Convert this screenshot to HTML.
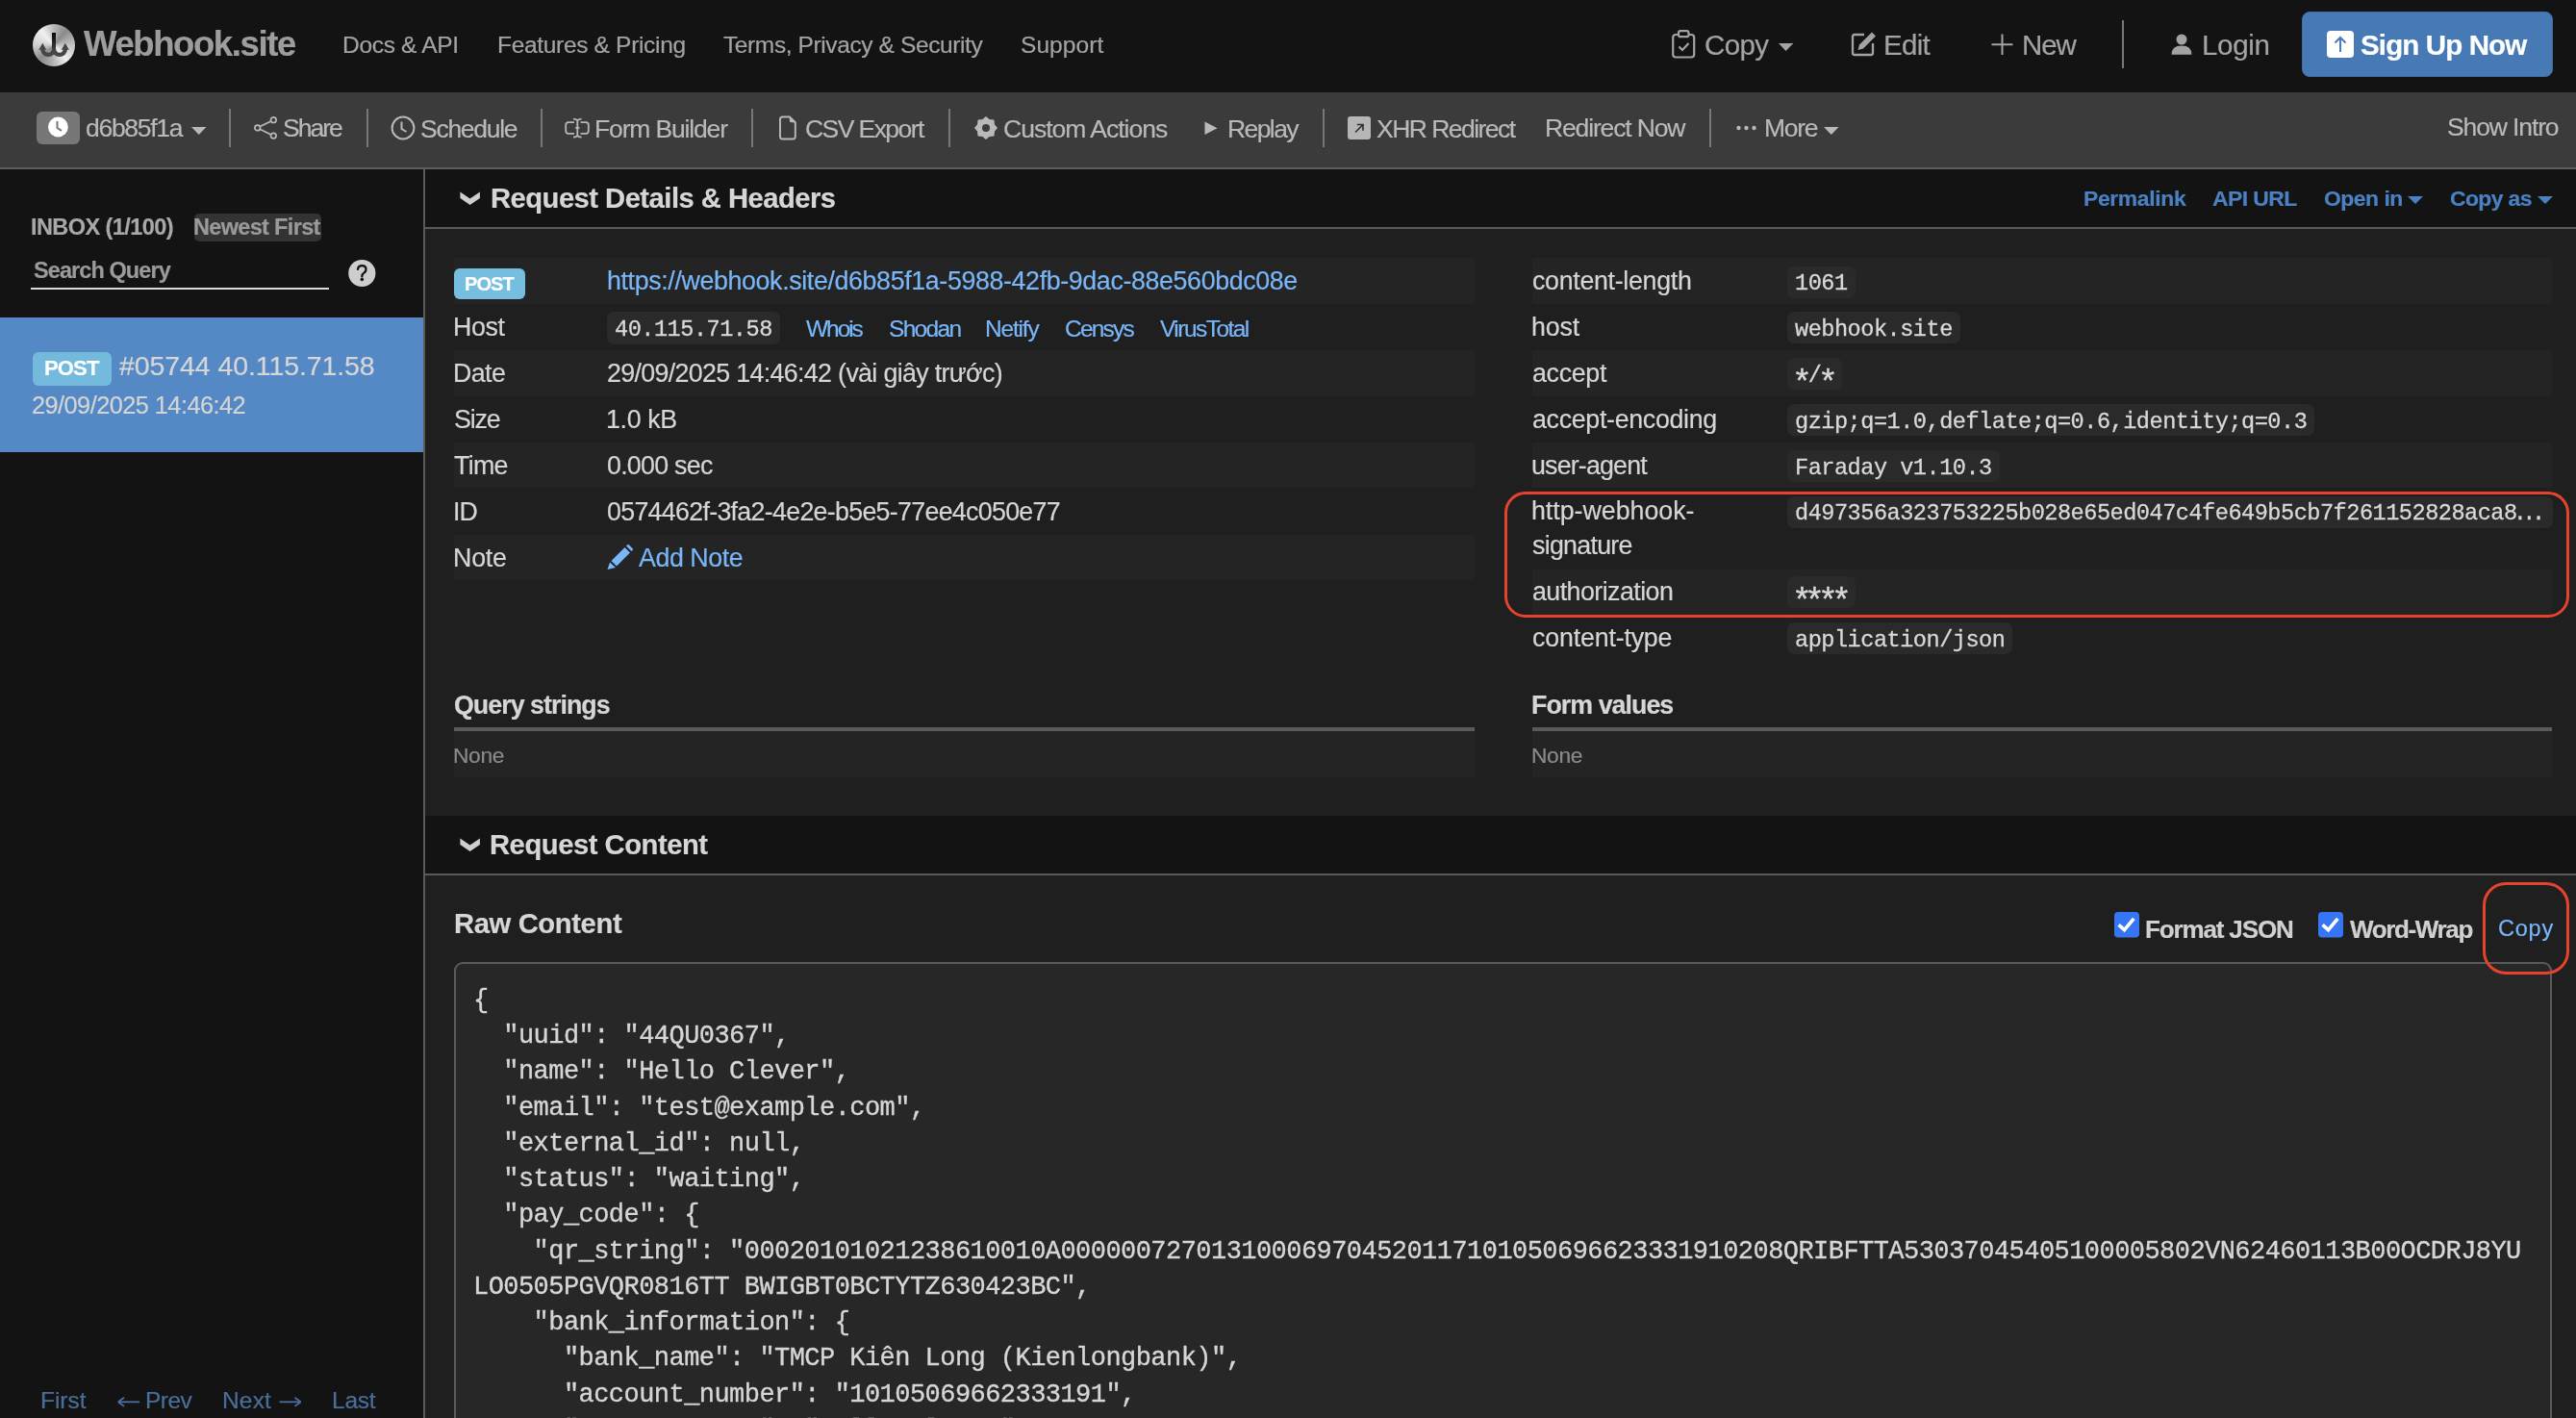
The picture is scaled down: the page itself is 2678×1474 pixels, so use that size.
<!DOCTYPE html>
<html><head><meta charset="utf-8"><title>Webhook.site</title>
<style>
html,body{margin:0;padding:0;width:2678px;height:1474px;overflow:hidden;background:#1f1f1f;font-family:"Liberation Sans",sans-serif}
.a{position:absolute}
.t{position:absolute;white-space:nowrap;line-height:1;font-family:"Liberation Sans",sans-serif;will-change:transform}
.m{font-family:"Liberation Mono",monospace}
.cbox{position:absolute;height:33px;background:#2a2a2a;border-radius:7px}
.div{position:absolute;width:2px;background:#777;top:113px;height:40px}
.code{position:absolute;left:492px;white-space:pre;font-family:"Liberation Mono",monospace;font-size:27px;letter-spacing:-0.55px;line-height:1;color:#d6d6d6;will-change:transform;-webkit-text-stroke:0.35px #d6d6d6}
</style></head><body>
<!-- navbar -->
<div class="a" style="left:0;top:0;width:2678px;height:96px;background:#131313"></div>
<!-- toolbar -->
<div class="a" style="left:0;top:96px;width:2678px;height:78px;background:#3b3b3b"></div>
<div class="a" style="left:0;top:174px;width:2678px;height:2px;background:#5c5c5c"></div>
<!-- sidebar -->
<div class="a" style="left:0;top:176px;width:440px;height:1298px;background:#131313"></div>
<div class="a" style="left:440px;top:176px;width:2px;height:1298px;background:#5a5a5a"></div>
<div class="a" style="left:0;top:330px;width:440px;height:140px;background:#5589c5"></div>
<div class="a" style="left:202px;top:222px;width:132px;height:29px;background:#333;border-radius:5px"></div>
<div class="a" style="left:32px;top:299px;width:310px;height:2px;background:#dcdcdc"></div>
<div class="a" style="left:34px;top:366px;width:82px;height:35px;background:#74badd;border-radius:6px"></div>
<svg class="a" style="left:361px;top:269px" width="30" height="30" viewBox="0 0 30 30"><circle cx="15.3" cy="15" r="14.1" fill="#cdcdcd"/><path d="M11 10.9 Q11.4 7.2 15.3 7.2 Q19.5 7.2 19.5 10.9 Q19.5 13.1 17.4 14.6 Q15.3 16 15.3 18.2" fill="none" stroke="#111" stroke-width="2.3" stroke-linecap="round"/><circle cx="15.3" cy="21.4" r="1.8" fill="#111"/></svg>

<!-- section 1 header -->
<div class="a" style="left:442px;top:176px;width:2236px;height:60px;background:#131313"></div>
<div class="a" style="left:442px;top:236px;width:2236px;height:2px;background:#5a5a5a"></div>
<!-- stripes left -->
<div class="a" style="left:472px;top:268px;width:1061px;height:48px;background:#242424"></div>
<div class="a" style="left:472px;top:363.6px;width:1061px;height:48px;background:#242424"></div>
<div class="a" style="left:472px;top:459.8px;width:1061px;height:47.7px;background:#242424"></div>
<div class="a" style="left:472px;top:556px;width:1061px;height:47.4px;background:#242424"></div>
<!-- stripes right -->
<div class="a" style="left:1593px;top:268px;width:1060px;height:48.3px;background:#242424"></div>
<div class="a" style="left:1593px;top:364.3px;width:1060px;height:47.5px;background:#242424"></div>
<div class="a" style="left:1593px;top:460px;width:1060px;height:47.1px;background:#242424"></div>
<div class="a" style="left:1593px;top:591.8px;width:1060px;height:47px;background:#242424"></div>
<!-- POST badge main -->
<div class="a" style="left:472px;top:279px;width:74px;height:32px;background:#76bedf;border-radius:6px"></div>
<!-- host code -->
<div class="cbox" style="left:631px;top:324px;width:180px;height:34px"></div>
<div class="cbox" style="left:1858px;top:276.5px;width:70.6px"></div>
<div class="t m" style="left:1866.0px;top:283.0px;font-size:23.6px;letter-spacing:-0.51px;-webkit-text-stroke:0.3px #d8d8d8;color:#d8d8d8">1061</div>
<div class="cbox" style="left:1858px;top:324.4px;width:179.8px"></div>
<div class="t m" style="left:1866.0px;top:330.9px;font-size:23.6px;letter-spacing:-0.51px;-webkit-text-stroke:0.3px #d8d8d8;color:#d8d8d8">webhook.site</div>
<div class="cbox" style="left:1858px;top:372.0px;width:57.0px"></div>
<div class="t m" style="left:1866.0px;top:378.5px;font-size:23.6px;letter-spacing:-0.51px;-webkit-text-stroke:0.3px #d8d8d8;color:#d8d8d8">&nbsp;/&nbsp;</div>
<div class="t m" style="left:1862.5px;top:382.5px;font-size:34.7px;color:#d8d8d8;-webkit-text-stroke:0.4px #d8d8d8">*</div>
<div class="t m" style="left:1889.8px;top:382.5px;font-size:34.7px;color:#d8d8d8;-webkit-text-stroke:0.4px #d8d8d8">*</div>
<div class="cbox" style="left:1858px;top:420.2px;width:548.4px"></div>
<div class="t m" style="left:1866.0px;top:426.7px;font-size:23.6px;letter-spacing:-0.51px;-webkit-text-stroke:0.3px #d8d8d8;color:#d8d8d8">gzip;q=1.0,deflate;q=0.6,identity;q=0.3</div>
<div class="cbox" style="left:1858px;top:468.2px;width:220.8px"></div>
<div class="t m" style="left:1866.0px;top:474.7px;font-size:23.6px;letter-spacing:-0.51px;-webkit-text-stroke:0.3px #d8d8d8;color:#d8d8d8">Faraday v1.10.3</div>
<div class="cbox" style="left:1858px;top:515.8px;width:795.7px"></div>
<div class="t m" style="left:1866.0px;top:522.3px;font-size:23.6px;letter-spacing:-0.51px;-webkit-text-stroke:0.3px #d8d8d8;color:#d8d8d8">d497356a323753225b028e65ed047c4fe649b5cb7f261152828aca8<span style="letter-spacing:-4.5px;margin-left:-4px">...</span></div>
<div class="cbox" style="left:1858px;top:599.0px;width:70.6px"></div>
<div class="t m" style="left:1866.0px;top:605.5px;font-size:23.6px;letter-spacing:-0.51px;-webkit-text-stroke:0.3px #d8d8d8;color:#d8d8d8">&nbsp;&nbsp;&nbsp;&nbsp;</div>
<div class="t m" style="left:1862.5px;top:609.5px;font-size:34.7px;color:#d8d8d8;-webkit-text-stroke:0.4px #d8d8d8">*</div>
<div class="t m" style="left:1876.2px;top:609.5px;font-size:34.7px;color:#d8d8d8;-webkit-text-stroke:0.4px #d8d8d8">*</div>
<div class="t m" style="left:1889.8px;top:609.5px;font-size:34.7px;color:#d8d8d8;-webkit-text-stroke:0.4px #d8d8d8">*</div>
<div class="t m" style="left:1903.5px;top:609.5px;font-size:34.7px;color:#d8d8d8;-webkit-text-stroke:0.4px #d8d8d8">*</div>
<div class="cbox" style="left:1858px;top:647.2px;width:234.4px"></div>
<div class="t m" style="left:1866.0px;top:653.7px;font-size:23.6px;letter-spacing:-0.51px;-webkit-text-stroke:0.3px #d8d8d8;color:#d8d8d8">application/json</div>
<div class="t m" style="left:639px;top:331.2px;font-size:23.6px;letter-spacing:-0.51px;-webkit-text-stroke:0.3px #d8d8d8;color:#d8d8d8">40.115.71.58</div>
<!-- query strings -->
<div class="a" style="left:472px;top:756px;width:1061px;height:4px;background:#5a5a5a"></div>
<div class="a" style="left:1593px;top:756px;width:1060px;height:4px;background:#5a5a5a"></div>
<div class="a" style="left:472px;top:760px;width:1061px;height:48px;background:#242424"></div>
<div class="a" style="left:1593px;top:760px;width:1060px;height:48px;background:#242424"></div>

<!-- section 2 header -->
<div class="a" style="left:442px;top:848px;width:2236px;height:60px;background:#131313"></div>
<div class="a" style="left:442px;top:908px;width:2236px;height:2px;background:#5a5a5a"></div>
<!-- pre box -->
<div class="a" style="left:472px;top:1000px;width:2177px;height:600px;background:#272727;border:2px solid #5a5a5a;border-radius:9px"></div>

<!-- toolbar dividers -->
<div class="div" style="left:238px"></div>
<div class="div" style="left:381px"></div>
<div class="div" style="left:562px"></div>
<div class="div" style="left:781px"></div>
<div class="div" style="left:986px"></div>
<div class="div" style="left:1375px"></div>
<div class="div" style="left:1777px"></div>
<div class="a" style="left:2206px;top:21px;width:2px;height:50px;background:#777"></div>

<!-- sign up button -->
<div class="a" style="left:2393px;top:12px;width:259px;height:66px;background:#477ab5;border:1px solid #3f6da6;border-radius:8px"></div>

<div class="a" style="left:34px;top:25px;width:44px;height:44px;border-radius:50%;background:conic-gradient(from 0deg,#b8b8b8 0deg,#8a8a8a 40deg,#c4c4c4 90deg,#efefef 140deg,#b0b0b0 185deg,#8c8c8c 225deg,#cfcfcf 270deg,#f0f0f0 320deg,#b8b8b8 360deg)"></div>
<svg class="a" style="left:33px;top:24px" width="46" height="46" viewBox="0 0 46 46"><defs><linearGradient id="stm" gradientUnits="userSpaceOnUse" x1="0" y1="10" x2="0" y2="30"><stop offset="0" stop-color="#050505"/><stop offset="1" stop-color="#484848"/></linearGradient></defs>
<path d="M23 10 V27.5" stroke="url(#stm)" stroke-width="4" fill="none"/>
<path d="M11.3 27 A5.85 5.85 0 0 0 23 27 A5.9 5.9 0 0 0 34.8 27" stroke="#464646" stroke-width="4.4" fill="none"/>
<path d="M7.2 28 L11.3 20.8 L15.4 28 Q11.3 26.6 7.2 28 Z M30.7 28 L34.8 20.8 L38.9 28 Q34.8 26.6 30.7 28 Z" fill="#464646"/></svg>
<svg class="a" style="left:1737px;top:31px" width="28" height="30" viewBox="0 0 28 30"><rect x="2.2" y="5" width="22" height="23.5" rx="3" fill="none" stroke="#a3a3a3" stroke-width="2.2"/><rect x="8" y="1.2" width="10.5" height="6" rx="2" fill="#131313" stroke="#a3a3a3" stroke-width="2.2"/><path d="M8.5 17.5 L12 21 L18.5 14" fill="none" stroke="#a3a3a3" stroke-width="2.2"/></svg>
<svg class="a" style="left:1848.5px;top:45px" width="15.2" height="8" viewBox="0 0 15.2 8"><path d="M0 0 H15.2 L7.6 8 Z" fill="#a3a3a3"/></svg>
<svg class="a" style="left:1924px;top:32px" width="28" height="27" viewBox="0 0 28 27"><path d="M14 4 H4 Q2 4 2 6 V23 Q2 25 4 25 H21 Q23 25 23 23 V13" fill="none" stroke="#a3a3a3" stroke-width="2.3"/><path d="M22 1.5 L26 5.5 L13 18.5 L7.5 20 L9 14.5 Z" fill="#a3a3a3"/></svg>
<svg class="a" style="left:2070px;top:35px" width="23" height="23" viewBox="0 0 23 23"><path d="M11.5 0.5 V22 M0.5 11.2 H22.5" stroke="#a3a3a3" stroke-width="2"/></svg>
<svg class="a" style="left:2257px;top:35px" width="22" height="22" viewBox="0 0 22 22"><circle cx="11" cy="6" r="5.5" fill="#a3a3a3"/><path d="M0.5 21.8 Q0.5 12.5 11 12.5 Q21.5 12.5 21.5 21.8 Z" fill="#a3a3a3"/></svg>
<svg class="a" style="left:2419px;top:32px" width="28" height="28" viewBox="0 0 28 28"><rect x="0" y="0" width="28" height="28" rx="4" fill="#fff"/><path d="M14 22 V7 M8.5 12.5 L14 7 L19.5 12.5" fill="none" stroke="#4a7bb7" stroke-width="2"/></svg>
<div class="a" style="left:38px;top:116px;width:45px;height:34px;background:#777;border-radius:6px"></div>
<svg class="a" style="left:49px;top:121px" width="23" height="23" viewBox="0 0 23 23"><circle cx="11.4" cy="11" r="10.4" fill="#fff"/><path d="M10.5 5 V12 L15 14.8" fill="none" stroke="#777" stroke-width="2"/></svg>
<svg class="a" style="left:198.5px;top:132px" width="15.5" height="8" viewBox="0 0 15.5 8"><path d="M0 0 H15.5 L7.75 8 Z" fill="#b9b9b9"/></svg>
<svg class="a" style="left:263px;top:120px" width="27" height="27" viewBox="0 0 27 27"><g fill="none" stroke="#b9b9b9" stroke-width="1.7"><circle cx="21.3" cy="4.7" r="2.8"/><circle cx="4.7" cy="12.9" r="2.8"/><circle cx="21.3" cy="21.1" r="2.8"/><path d="M7.2 11.6 L18.8 5.9 M7.2 14.2 L18.8 19.9"/></g></svg>
<svg class="a" style="left:406px;top:120px" width="26" height="26" viewBox="0 0 26 26"><circle cx="13" cy="13" r="11.4" fill="none" stroke="#b9b9b9" stroke-width="2"/><path d="M11.5 6.5 V14 L16.5 17" fill="none" stroke="#b9b9b9" stroke-width="2"/></svg>
<svg class="a" style="left:587px;top:120px" width="27" height="27" viewBox="0 0 27 27"><g fill="none" stroke="#b8b8b8" stroke-width="1.8"><path d="M10 7.2 H4 Q1.2 7.2 1.2 10 V16 Q1.2 18.8 4 18.8 H10 M16.6 7.2 H22 Q24.8 7.2 24.8 10 V16 Q24.8 18.8 22 18.8 H16.6"/><path d="M13.3 5.5 V20.5 M9 3.6 Q13.3 4 13.3 6 Q13.3 4 17.6 3.6 M9 22.6 Q13.3 22.2 13.3 20.2 Q13.3 22.2 17.6 22.6 M11.2 12.9 H15.4"/></g></svg>
<svg class="a" style="left:809px;top:120px" width="20" height="26" viewBox="0 0 20 26"><path d="M2 4 Q2 1.5 4.5 1.5 H11.8 L17.8 7.2 V22 Q17.8 24.5 15.3 24.5 H4.5 Q2 24.5 2 22 Z" fill="none" stroke="#b9b9b9" stroke-width="1.9"/><path d="M11.8 1.5 V5.5 Q11.8 7.2 13.5 7.2 H17.8 Z" fill="#b9b9b9"/></svg>
<svg class="a" style="left:1012px;top:120px" width="26" height="26" viewBox="0 0 26 26"><polygon points="13.00,1.80 16.44,4.69 20.92,5.08 21.31,9.56 24.20,13.00 21.31,16.44 20.92,20.92 16.44,21.31 13.00,24.20 9.56,21.31 5.08,20.92 4.69,16.44 1.80,13.00 4.69,9.56 5.08,5.08 9.56,4.69" fill="#b9b9b9" stroke="#b9b9b9" stroke-width="1.2" stroke-linejoin="round"/><circle cx="13" cy="13" r="4" fill="#3b3b3b"/></svg>
<svg class="a" style="left:1251.5px;top:126px" width="14" height="15" viewBox="0 0 14 15"><path d="M0.5 0.5 L13.5 7.3 L0.5 14 Z" fill="#b9b9b9"/></svg>
<svg class="a" style="left:1401px;top:121px" width="24" height="24" viewBox="0 0 24 24"><rect width="24" height="24" rx="3" fill="#b6b6b6"/><path d="M8 16.5 L16 8.5 M9.8 8.5 H16 V14.8" fill="none" stroke="#2e2e2e" stroke-width="1.6"/></svg>
<svg class="a" style="left:1805px;top:130px" width="21" height="6" viewBox="0 0 21 6"><circle cx="2.5" cy="3" r="2.2" fill="#b9b9b9"/><circle cx="10.5" cy="3" r="2.2" fill="#b9b9b9"/><circle cx="18.5" cy="3" r="2.2" fill="#b9b9b9"/></svg>
<svg class="a" style="left:1896.2px;top:132px" width="15.5" height="8" viewBox="0 0 15.5 8"><path d="M0 0 H15.5 L7.75 8 Z" fill="#b9b9b9"/></svg>
<svg class="a" style="left:477px;top:198.5px" width="23" height="16" viewBox="0 0 23 16"><path d="M1.4 0.6 L11.6 7.4 L21.9 0.6 V7 L11.6 14.1 L1.4 7 Z" fill="#cfcfcf"/></svg>
<svg class="a" style="left:477px;top:870.5px" width="23" height="16" viewBox="0 0 23 16"><path d="M1.4 0.6 L11.6 7.4 L21.9 0.6 V7 L11.6 14.1 L1.4 7 Z" fill="#cfcfcf"/></svg>
<svg class="a" style="left:2503px;top:204px" width="16" height="8" viewBox="0 0 16 8"><path d="M0 0 H16 L8.0 8 Z" fill="#4a81c3"/></svg>
<svg class="a" style="left:2637.8px;top:204px" width="16" height="8" viewBox="0 0 16 8"><path d="M0 0 H16 L8.0 8 Z" fill="#4a81c3"/></svg>
<svg class="a" style="left:631px;top:566px" width="27" height="27" viewBox="0 0 27 27"><path d="M0.5 26 L3 18.5 L9 24 Z M4.5 17 L18.5 3 L24 8.5 L10 22.5 Z M20 1.5 L22 -0.5 L27.5 5 L25.5 7 Z" fill="#78b6f8"/></svg>
<svg class="a" style="left:122px;top:1451px" width="24" height="13" viewBox="0 0 24 13"><path d="M1.5 6.3 H23" stroke="#4a6e9a" stroke-width="1.8"/><path d="M0.8 6.3 L7 1.8 M0.8 6.3 L7 10.8" stroke="#4a6e9a" stroke-width="1.8" fill="none"/></svg>
<svg class="a" style="left:289.5px;top:1451px" width="24" height="13" viewBox="0 0 24 13"><path d="M0.5 6.3 H22" stroke="#4a6e9a" stroke-width="1.8"/><path d="M22.7 6.3 L16.5 1.8 M22.7 6.3 L16.5 10.8" stroke="#4a6e9a" stroke-width="1.8" fill="none"/></svg>
<svg class="a" style="left:2198px;top:947.5px" width="26" height="27" viewBox="0 0 26 27"><rect x="0" y="0" width="26" height="26.5" rx="4" fill="#3676f4"/><path d="M4.6 13.3 L10.5 18.6 L20.3 6.8" fill="none" stroke="#fff" stroke-width="3.6"/></svg>
<svg class="a" style="left:2410px;top:947.5px" width="26" height="27" viewBox="0 0 26 27"><rect x="0" y="0" width="26" height="26.5" rx="4" fill="#3676f4"/><path d="M4.6 13.3 L10.5 18.6 L20.3 6.8" fill="none" stroke="#fff" stroke-width="3.6"/></svg>
<div class="t" style="left:87.3px;top:28.3px;font-size:36.50px;color:#9d9d9d;-webkit-text-stroke:0.2px #9d9d9d;font-weight:700;letter-spacing:-1.40px">Webhook.site</div>
<div class="t" style="left:356.3px;top:34.8px;font-size:24.50px;color:#a3a3a3;-webkit-text-stroke:0.2px #a3a3a3;letter-spacing:-0.31px">Docs &amp; API</div>
<div class="t" style="left:516.6px;top:34.8px;font-size:24.50px;color:#a3a3a3;-webkit-text-stroke:0.2px #a3a3a3;letter-spacing:-0.32px">Features &amp; Pricing</div>
<div class="t" style="left:751.7px;top:34.8px;font-size:24.50px;color:#a3a3a3;-webkit-text-stroke:0.2px #a3a3a3;letter-spacing:-0.39px">Terms, Privacy &amp; Security</div>
<div class="t" style="left:1060.9px;top:34.8px;font-size:24.50px;color:#a3a3a3;-webkit-text-stroke:0.2px #a3a3a3;letter-spacing:0.07px">Support</div>
<div class="t" style="left:1772.4px;top:31.9px;font-size:29.50px;color:#a3a3a3;-webkit-text-stroke:0.2px #a3a3a3;letter-spacing:-0.63px">Copy</div>
<div class="t" style="left:1958.4px;top:31.9px;font-size:29.50px;color:#a3a3a3;-webkit-text-stroke:0.2px #a3a3a3;letter-spacing:-0.68px">Edit</div>
<div class="t" style="left:2102.4px;top:31.9px;font-size:29.50px;color:#a3a3a3;-webkit-text-stroke:0.2px #a3a3a3;letter-spacing:-1.08px">New</div>
<div class="t" style="left:2289.0px;top:31.9px;font-size:29.50px;color:#a3a3a3;-webkit-text-stroke:0.2px #a3a3a3;letter-spacing:-0.33px">Login</div>
<div class="t" style="left:2454.3px;top:31.9px;font-size:29.50px;color:#ffffff;-webkit-text-stroke:0.2px #ffffff;font-weight:700;letter-spacing:-0.87px">Sign Up Now</div>
<div class="t" style="left:89.0px;top:120.1px;font-size:26.50px;color:#b9b9b9;-webkit-text-stroke:0.2px #b9b9b9;letter-spacing:-1.28px">d6b85f1a</div>
<div class="t" style="left:294.4px;top:120.4px;font-size:26.50px;color:#b9b9b9;-webkit-text-stroke:0.2px #b9b9b9;letter-spacing:-2.00px">Share</div>
<div class="t" style="left:437.4px;top:120.5px;font-size:26.50px;color:#b9b9b9;-webkit-text-stroke:0.2px #b9b9b9;letter-spacing:-1.27px">Schedule</div>
<div class="t" style="left:617.8px;top:120.5px;font-size:26.50px;color:#b9b9b9;-webkit-text-stroke:0.2px #b9b9b9;letter-spacing:-1.15px">Form Builder</div>
<div class="t" style="left:837.2px;top:120.5px;font-size:26.50px;color:#b9b9b9;-webkit-text-stroke:0.2px #b9b9b9;letter-spacing:-1.57px">CSV Export</div>
<div class="t" style="left:1042.8px;top:120.5px;font-size:26.50px;color:#b9b9b9;-webkit-text-stroke:0.2px #b9b9b9;letter-spacing:-0.99px">Custom Actions</div>
<div class="t" style="left:1275.8px;top:120.5px;font-size:26.50px;color:#b9b9b9;-webkit-text-stroke:0.2px #b9b9b9;letter-spacing:-1.58px">Replay</div>
<div class="t" style="left:1430.8px;top:120.5px;font-size:26.50px;color:#b9b9b9;-webkit-text-stroke:0.2px #b9b9b9;letter-spacing:-1.54px">XHR Redirect</div>
<div class="t" style="left:1606.3px;top:120.1px;font-size:26.50px;color:#b9b9b9;-webkit-text-stroke:0.2px #b9b9b9;letter-spacing:-1.15px">Redirect Now</div>
<div class="t" style="left:1833.5px;top:120.1px;font-size:26.50px;color:#b9b9b9;-webkit-text-stroke:0.2px #b9b9b9;letter-spacing:-1.31px">More</div>
<div class="t" style="left:2543.8px;top:119.4px;font-size:26.50px;color:#b9b9b9;-webkit-text-stroke:0.2px #b9b9b9;letter-spacing:-1.12px">Show Intro</div>
<div class="t" style="left:32.4px;top:225.0px;font-size:23.50px;color:#a8a8a8;-webkit-text-stroke:0.2px #a8a8a8;font-weight:700;letter-spacing:-0.58px">INBOX (1/100)</div>
<div class="t" style="left:201.1px;top:225.0px;font-size:23.50px;color:#9a9a9a;-webkit-text-stroke:0.2px #9a9a9a;font-weight:700;letter-spacing:-0.67px">Newest First</div>
<div class="t" style="left:35.4px;top:269.7px;font-size:23.50px;color:#9a9a9a;-webkit-text-stroke:0.2px #9a9a9a;font-weight:700;letter-spacing:-0.92px">Search Query</div>
<div class="t" style="left:45.6px;top:371.7px;font-size:22.00px;color:#ffffff;-webkit-text-stroke:0.2px #ffffff;font-weight:700;letter-spacing:-0.85px">POST</div>
<div class="t" style="left:123.5px;top:366.2px;font-size:28.50px;color:#d6d6d6;-webkit-text-stroke:0.2px #d6d6d6;letter-spacing:-0.09px">#05744 40.115.71.58</div>
<div class="t" style="left:32.7px;top:409.4px;font-size:25.30px;color:#d4d4d4;-webkit-text-stroke:0.2px #d4d4d4;letter-spacing:-0.53px">29/09/2025 14:46:42</div>
<div class="t" style="left:42.3px;top:1443.8px;font-size:24.50px;color:#4a6e9a;-webkit-text-stroke:0.2px #4a6e9a;letter-spacing:-0.03px">First</div>
<div class="t" style="left:151.3px;top:1443.8px;font-size:24.50px;color:#4a6e9a;-webkit-text-stroke:0.2px #4a6e9a;letter-spacing:-0.54px">Prev</div>
<div class="t" style="left:231.0px;top:1443.8px;font-size:24.50px;color:#4a6e9a;-webkit-text-stroke:0.2px #4a6e9a;letter-spacing:0.18px">Next</div>
<div class="t" style="left:344.5px;top:1443.8px;font-size:24.50px;color:#4a6e9a;-webkit-text-stroke:0.2px #4a6e9a;letter-spacing:-0.23px">Last</div>
<div class="t" style="left:509.9px;top:191.6px;font-size:29.20px;color:#d6d6d6;-webkit-text-stroke:0.2px #d6d6d6;font-weight:700;letter-spacing:-0.52px">Request Details &amp; Headers</div>
<div class="t" style="left:2165.9px;top:195.0px;font-size:22.90px;color:#4a81c3;-webkit-text-stroke:0.2px #4a81c3;font-weight:700;letter-spacing:-0.35px">Permalink</div>
<div class="t" style="left:2300.1px;top:195.0px;font-size:22.90px;color:#4a81c3;-webkit-text-stroke:0.2px #4a81c3;font-weight:700;letter-spacing:-0.54px">API URL</div>
<div class="t" style="left:2415.5px;top:195.0px;font-size:22.90px;color:#4a81c3;-webkit-text-stroke:0.2px #4a81c3;font-weight:700;letter-spacing:-0.49px">Open in</div>
<div class="t" style="left:2546.7px;top:195.0px;font-size:22.90px;color:#4a81c3;-webkit-text-stroke:0.2px #4a81c3;font-weight:700;letter-spacing:-0.61px">Copy as</div>
<div class="t" style="left:483.4px;top:284.5px;font-size:20.00px;color:#ffffff;-webkit-text-stroke:0.2px #ffffff;font-weight:700;letter-spacing:-0.91px">POST</div>
<div class="t" style="left:630.7px;top:279.0px;font-size:26.80px;color:#78b6f8;-webkit-text-stroke:0.2px #78b6f8;letter-spacing:-0.37px">https://webhook.site/d6b85f1a-5988-42fb-9dac-88e560bdc08e</div>
<div class="t" style="left:471.1px;top:327.2px;font-size:26.80px;color:#d5d5d5;-webkit-text-stroke:0.2px #d5d5d5;letter-spacing:-0.37px">Host</div>
<div class="t" style="left:471.1px;top:374.9px;font-size:26.80px;color:#d5d5d5;-webkit-text-stroke:0.2px #d5d5d5;letter-spacing:-0.58px">Date</div>
<div class="t" style="left:471.9px;top:422.9px;font-size:26.80px;color:#d5d5d5;-webkit-text-stroke:0.2px #d5d5d5;letter-spacing:-1.14px">Size</div>
<div class="t" style="left:471.7px;top:471.1px;font-size:26.80px;color:#d5d5d5;-webkit-text-stroke:0.2px #d5d5d5;letter-spacing:-0.68px">Time</div>
<div class="t" style="left:471.1px;top:518.9px;font-size:26.80px;color:#d5d5d5;-webkit-text-stroke:0.2px #d5d5d5;letter-spacing:-0.98px">ID</div>
<div class="t" style="left:471.1px;top:567.0px;font-size:26.80px;color:#d5d5d5;-webkit-text-stroke:0.2px #d5d5d5;letter-spacing:-0.21px">Note</div>
<div class="t" style="left:837.9px;top:329.7px;font-size:24.50px;color:#78b6f8;-webkit-text-stroke:0.2px #78b6f8;letter-spacing:-2.05px">Whois</div>
<div class="t" style="left:923.5px;top:329.7px;font-size:24.50px;color:#78b6f8;-webkit-text-stroke:0.2px #78b6f8;letter-spacing:-1.69px">Shodan</div>
<div class="t" style="left:1023.8px;top:329.7px;font-size:24.50px;color:#78b6f8;-webkit-text-stroke:0.2px #78b6f8;letter-spacing:-1.20px">Netify</div>
<div class="t" style="left:1106.8px;top:329.7px;font-size:24.50px;color:#78b6f8;-webkit-text-stroke:0.2px #78b6f8;letter-spacing:-1.79px">Censys</div>
<div class="t" style="left:1206.3px;top:329.7px;font-size:24.50px;color:#78b6f8;-webkit-text-stroke:0.2px #78b6f8;letter-spacing:-1.54px">VirusTotal</div>
<div class="t" style="left:630.7px;top:374.9px;font-size:26.80px;color:#d5d5d5;-webkit-text-stroke:0.2px #d5d5d5;letter-spacing:-0.66px">29/09/2025 14:46:42 (vài giây trước)</div>
<div class="t" style="left:630.3px;top:422.9px;font-size:26.80px;color:#d5d5d5;-webkit-text-stroke:0.2px #d5d5d5;letter-spacing:-0.36px">1.0 kB</div>
<div class="t" style="left:631.2px;top:471.1px;font-size:26.80px;color:#d5d5d5;-webkit-text-stroke:0.2px #d5d5d5;letter-spacing:-0.74px">0.000 sec</div>
<div class="t" style="left:631.2px;top:518.9px;font-size:26.80px;color:#d5d5d5;-webkit-text-stroke:0.2px #d5d5d5;letter-spacing:-0.70px">0574462f-3fa2-4e2e-b5e5-77ee4c050e77</div>
<div class="t" style="left:663.5px;top:567.0px;font-size:26.80px;color:#78b6f8;-webkit-text-stroke:0.2px #78b6f8;letter-spacing:-0.45px">Add Note</div>
<div class="t" style="left:1592.8px;top:279.2px;font-size:26.80px;color:#d5d5d5;-webkit-text-stroke:0.2px #d5d5d5;letter-spacing:-0.31px">content-length</div>
<div class="t" style="left:1591.9px;top:326.9px;font-size:26.80px;color:#d5d5d5;-webkit-text-stroke:0.2px #d5d5d5;letter-spacing:-0.16px">host</div>
<div class="t" style="left:1592.8px;top:374.5px;font-size:26.80px;color:#d5d5d5;-webkit-text-stroke:0.2px #d5d5d5;letter-spacing:-0.32px">accept</div>
<div class="t" style="left:1592.8px;top:422.7px;font-size:26.80px;color:#d5d5d5;-webkit-text-stroke:0.2px #d5d5d5;letter-spacing:-0.32px">accept-encoding</div>
<div class="t" style="left:1591.9px;top:470.7px;font-size:26.80px;color:#d5d5d5;-webkit-text-stroke:0.2px #d5d5d5;letter-spacing:-0.82px">user-agent</div>
<div class="t" style="left:1591.9px;top:518.3px;font-size:26.80px;color:#d5d5d5;-webkit-text-stroke:0.2px #d5d5d5;letter-spacing:-0.03px">http-webhook-</div>
<div class="t" style="left:1593.2px;top:553.6px;font-size:26.80px;color:#d5d5d5;-webkit-text-stroke:0.2px #d5d5d5;letter-spacing:-0.72px">signature</div>
<div class="t" style="left:1592.8px;top:601.5px;font-size:26.80px;color:#d5d5d5;-webkit-text-stroke:0.2px #d5d5d5;letter-spacing:-0.55px">authorization</div>
<div class="t" style="left:1592.8px;top:649.7px;font-size:26.80px;color:#d5d5d5;-webkit-text-stroke:0.2px #d5d5d5;letter-spacing:-0.18px">content-type</div>
<div class="t" style="left:472.0px;top:720.2px;font-size:26.80px;color:#d6d6d6;-webkit-text-stroke:0.2px #d6d6d6;font-weight:700;letter-spacing:-0.97px">Query strings</div>
<div class="t" style="left:1591.8px;top:720.2px;font-size:26.80px;color:#d6d6d6;-webkit-text-stroke:0.2px #d6d6d6;font-weight:700;letter-spacing:-0.96px">Form values</div>
<div class="t" style="left:471.0px;top:774.3px;font-size:22.80px;color:#8a8a8a;-webkit-text-stroke:0.2px #8a8a8a;letter-spacing:-0.34px">None</div>
<div class="t" style="left:1591.7px;top:774.3px;font-size:22.80px;color:#8a8a8a;-webkit-text-stroke:0.2px #8a8a8a;letter-spacing:-0.34px">None</div>
<div class="t" style="left:509.1px;top:863.7px;font-size:29.20px;color:#d6d6d6;-webkit-text-stroke:0.2px #d6d6d6;font-weight:700;letter-spacing:-0.46px">Request Content</div>
<div class="t" style="left:471.6px;top:945.6px;font-size:29.20px;color:#d6d6d6;-webkit-text-stroke:0.2px #d6d6d6;font-weight:700;letter-spacing:-0.37px">Raw Content</div>
<div class="t" style="left:2229.7px;top:952.6px;font-size:26.00px;color:#d0d0d0;-webkit-text-stroke:0.2px #d0d0d0;font-weight:700;letter-spacing:-1.14px">Format JSON</div>
<div class="t" style="left:2442.6px;top:952.6px;font-size:26.00px;color:#d0d0d0;-webkit-text-stroke:0.2px #d0d0d0;font-weight:700;letter-spacing:-1.36px">Word-Wrap</div>
<div class="t" style="left:2596.5px;top:953.7px;font-size:23.50px;color:#78b6f8;-webkit-text-stroke:0.2px #78b6f8;letter-spacing:0.76px">Copy</div>
<div class="code" style="top:1026.7px">{</div>
<div class="code" style="top:1064.0px">  &quot;uuid&quot;: &quot;44QU0367&quot;,</div>
<div class="code" style="top:1101.3px">  &quot;name&quot;: &quot;Hello Clever&quot;,</div>
<div class="code" style="top:1138.5px">  &quot;email&quot;: &quot;test@example.com&quot;,</div>
<div class="code" style="top:1175.8px">  &quot;external_id&quot;: null,</div>
<div class="code" style="top:1213.1px">  &quot;status&quot;: &quot;waiting&quot;,</div>
<div class="code" style="top:1250.3px">  &quot;pay_code&quot;: {</div>
<div class="code" style="top:1287.6px">    &quot;qr_string&quot;: &quot;00020101021238610010A000000727013100069704520117101050696623331910208QRIBFTTA53037045405100005802VN62460113B00OCDRJ8YU</div>
<div class="code" style="top:1324.9px">LO0505PGVQR0816TT BWIGBT0BCTYTZ630423BC&quot;,</div>
<div class="code" style="top:1362.1px">    &quot;bank_information&quot;: {</div>
<div class="code" style="top:1399.4px">      &quot;bank_name&quot;: &quot;TMCP Kiên Long (Kienlongbank)&quot;,</div>
<div class="code" style="top:1436.7px">      &quot;account_number&quot;: &quot;10105069662333191&quot;,</div>
<div class="code" style="top:1474.0px">      &quot;account_name&quot;: &quot;Hello Clever&quot;,</div>
<!-- red annotations -->
<div class="a" style="left:1564px;top:511px;width:1101px;height:125px;border:3px solid #e5432d;border-radius:22px"></div>
<div class="a" style="left:2581px;top:917px;width:84px;height:90px;border:3px solid #e5432d;border-radius:24px"></div>
</body></html>
